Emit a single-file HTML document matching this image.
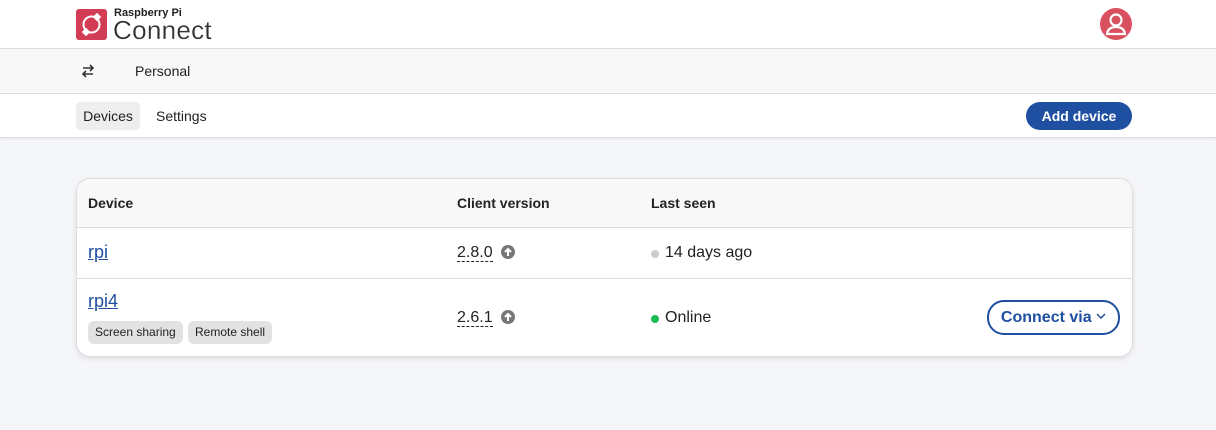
<!DOCTYPE html>
<html><head><style>
body{margin:0;width:1216px;height:430px;background:#f5f6f9;font-family:"Liberation Sans",Arial,sans-serif;color:#222;position:relative;overflow:hidden}
.top{position:absolute;left:0;top:0;width:1216px;height:48px;background:#fff;border-bottom:1px solid #ddd}
.org{position:absolute;left:0;top:49px;width:1216px;height:44px;background:#f8f8f8;border-bottom:1px solid #ddd}
.nav{position:absolute;left:0;top:94px;width:1216px;height:43px;background:#fff;border-bottom:1px solid #ddd;box-shadow:0 1px 2px rgba(0,0,0,.06)}
.abs{position:absolute}
.card{position:absolute;left:76px;top:178px;width:1055px;height:177px;background:#fff;border:1px solid #ddd;border-radius:14px;box-shadow:0 2px 6px rgba(0,0,0,.1);overflow:hidden}
.hdr{position:absolute;left:0;top:0;width:100%;height:48px;background:#f8f8f8;border-bottom:1px solid #ddd}
.th{position:absolute;top:16px;font-size:14px;font-weight:bold}
a{color:#1e4fa0;text-decoration:underline;font-size:18px}
.ver{position:absolute;font-size:16px;border-bottom:1px dashed #222;line-height:17px}
.up{position:absolute;width:14px;height:14px;border-radius:50%;background:#777}
.tag{position:absolute;top:142px;height:23px;background:#e2e2e2;border-radius:6px;font-size:12px;line-height:23px;padding:0 7px}
</style></head><body>
<div class="top">
<svg class="abs" style="left:76px;top:9px" width="31" height="31" viewBox="0 0 31 31"><rect width="31" height="31" rx="3" fill="#d23c54"/><circle cx="15.5" cy="15.5" r="8" fill="none" stroke="#fff" stroke-width="2"/><rect x="18" y="5" width="6" height="6" fill="#fff" transform="rotate(45 21 8)"/><rect x="7" y="20" width="6" height="6" fill="#fff" transform="rotate(45 10 23)"/></svg>
<div class="abs" style="left:114px;top:7px;font-size:11px;font-weight:bold">Raspberry Pi</div>
<div class="abs" style="left:113px;top:15px;font-size:26px;color:#333;letter-spacing:0.3px;-webkit-text-stroke:0.2px #fff">Connect</div>
<svg class="abs" style="left:1100px;top:8px" width="32" height="32" viewBox="0 0 32 32"><circle cx="16" cy="16" r="16" fill="#d9515e"/><circle cx="16" cy="12" r="5.5" fill="none" stroke="#fff" stroke-width="2.2"/><path d="M7 26 Q8 19 16 19 Q24 19 25 26 Z" fill="none" stroke="#fff" stroke-width="2.2"/></svg>
</div>
<div class="org">
<svg class="abs" style="left:81px;top:15px" width="14" height="14" viewBox="0 0 14 14" fill="none" stroke="#333" stroke-width="1.6"><path d="M2 4H12M9 1L12 4L9 7"/><path d="M12 10H2M5 7L2 10L5 13"/></svg>
<div class="abs" style="left:135px;top:14px;font-size:14px">Personal</div></div>
<div class="nav">
<div class="abs" style="left:76px;top:8px;width:64px;height:28px;background:#eeeeee;border-radius:4px;font-size:14px;line-height:28px;text-align:center">Devices</div>
<div class="abs" style="left:156px;top:14px;font-size:14px">Settings</div>
<div class="abs" style="left:1026px;top:8px;width:106px;height:28px;background:#1e4fa0;border-radius:14px;color:#fff;font-size:14px;font-weight:bold;line-height:28px;text-align:center">Add device</div>
</div>
<div class="card">
<div class="hdr"><div class="th" style="left:11px">Device</div><div class="th" style="left:380px">Client version</div><div class="th" style="left:574px">Last seen</div></div>
<a class="abs" style="left:11px;top:63px">rpi</a>
<div class="ver" style="left:380px;top:65px">2.8.0</div>
<svg class="up" style="left:424px;top:66px" viewBox="0 0 14 14"><path d="M7 11V4M4 7L7 4L10 7" stroke="#fff" stroke-width="2" fill="none"/></svg>
<div class="abs" style="left:574px;top:71px;width:8px;height:8px;border-radius:50%;background:#ccc"></div>
<div class="abs" style="left:588px;top:65px;font-size:16px">14 days ago</div>
<div class="abs" style="left:0;top:99px;width:100%;border-top:1px solid #ddd"></div>
<a class="abs" style="left:11px;top:112px">rpi4</a>
<div class="tag" style="left:11px;top:142px">Screen sharing</div>
<div class="tag" style="left:111px">Remote shell</div>
<div class="ver" style="left:380px;top:130px">2.6.1</div>
<svg class="up" style="left:424px;top:131px" viewBox="0 0 14 14"><path d="M7 11V4M4 7L7 4L10 7" stroke="#fff" stroke-width="2" fill="none"/></svg>
<div class="abs" style="left:574px;top:136px;width:8px;height:8px;border-radius:50%;background:#1db954"></div>
<div class="abs" style="left:588px;top:130px;font-size:16px">Online</div>
<div class="abs" style="left:910px;top:121px;width:129px;height:31px;border:2px solid #1e4fa0;border-radius:17px;color:#1e4fa0;font-size:16px;font-weight:bold;line-height:31px;text-align:center">Connect via <svg width="10" height="7" viewBox="0 0 10 7" style="vertical-align:2px"><path d="M1 1L5 5L9 1" stroke="#1e4fa0" stroke-width="1.5" fill="none"/></svg></div>
</div>
</body></html>
